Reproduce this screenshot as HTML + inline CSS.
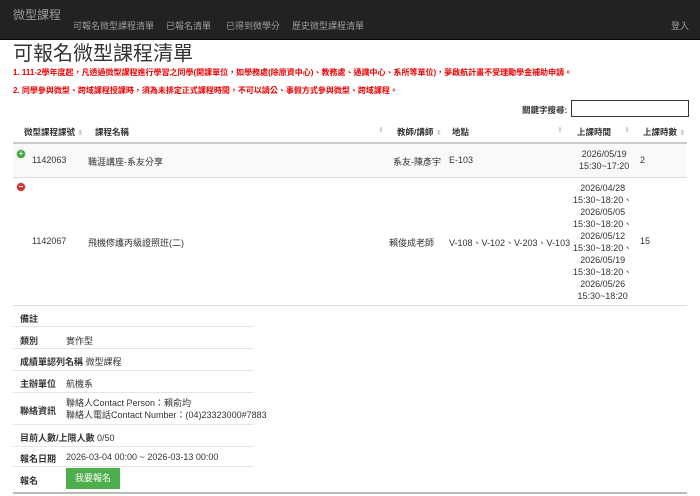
<!DOCTYPE html>
<html><head><meta charset="utf-8"><style>
*{margin:0;padding:0;box-sizing:border-box}
body{width:700px;height:496px;overflow:hidden;background:#fff;font-family:"Liberation Sans","Noto Sans CJK TC",sans-serif;color:#333;font-size:9px;position:relative}
.a{position:absolute;white-space:nowrap}
.nav{position:absolute;left:0;top:0;width:700px;height:40px;background:#222;border-bottom:1px solid #080808}
.nav .a{color:#9d9d9d;font-size:9px}
.red{color:#e00;font-weight:bold;font-size:8px}
.hd{font-weight:bold;font-size:8.5px}
.arr{color:#ccc;font-size:7px}
.line{position:absolute;left:13px;height:1px;background:#ddd}
.dl{position:absolute;left:13px;width:240px;height:1px;background:#e5e5e5}
.b{font-weight:bold}
</style></head><body>
<div class="nav">
<div class="a" style="left:13px;top:6px;font-size:12px">微型課程</div>
<div class="a" style="left:73px;top:19px">可報名微型課程清單</div>
<div class="a" style="left:166px;top:19px">已報名清單</div>
<div class="a" style="left:226px;top:19px">已得到微學分</div>
<div class="a" style="left:292px;top:19px">歷史微型課程清單</div>
<div class="a" style="left:671px;top:19px">登入</div>
</div>
<div class="a" style="left:13px;top:37px;font-size:20px;color:#333">可報名微型課程清單</div>
<div class="a red" style="left:13px;top:67px">1. 111-2學年度起，凡透過微型課程進行學習之同學(開課單位，如學務處(除原資中心)、教務處、通識中心、系所等單位)，夢啟航計畫不受理勵學金補助申請。</div>
<div class="a red" style="left:13px;top:85px">2. 同學參與微型、跨域課程授課時，須為未排定正式課程時間，不可以請公、事假方式參與微型、跨域課程。</div>
<div class="a b" style="left:522px;top:104px;font-size:8.5px">關鍵字搜尋:</div>
<div class="a" style="left:571px;top:100px;width:118px;height:17px;border:1px solid #333"></div>
<div class="a hd" style="left:24px;top:126px">微型課程課號 <span class="arr">⬍</span></div>
<div class="a hd" style="left:95px;top:126px">課程名稱</div><div class="a arr" style="left:378px;top:126px">⬍</div>
<div class="a hd" style="left:397px;top:126px">教師/講師 <span class="arr">⬍</span></div>
<div class="a hd" style="left:452px;top:126px">地點</div><div class="a arr" style="left:557px;top:126px">⬍</div>
<div class="a hd" style="left:577px;top:126px">上課時間</div><div class="a arr" style="left:624px;top:126px">⬍</div>
<div class="a hd" style="left:643px;top:126px">上課時數 <span class="arr">⬍</span></div>
<div class="line" style="top:142px;width:674px;height:2px;background:#ccc"></div>
<div class="a" style="left:13px;top:144px;width:674px;height:33px;background:#f9f9f9"></div>
<div class="a" style="left:16px;top:149px;width:10px;height:10px;border-radius:50%;background:#3a3;border:1px solid #ddd;color:#fff;font-size:8px;line-height:8px;text-align:center;font-weight:bold">+</div>
<div class="a" style="left:32px;top:155px">1142063</div>
<div class="a" style="left:88px;top:155px">職涯講座-系友分享</div>
<div class="a" style="left:393px;top:155px">系友-陳彥宇</div>
<div class="a" style="left:449px;top:155px">E-103</div>
<div class="a" style="left:579px;top:148px;text-align:center;line-height:12px">2026/05/19<br>15:30~17:20</div>
<div class="a" style="left:640px;top:155px">2</div>
<div class="line" style="top:177px;width:674px"></div>
<div class="a" style="left:16px;top:182px;width:10px;height:10px;border-radius:50%;background:#c33;border:1px solid #ddd;color:#fff;font-size:8px;line-height:7px;text-align:center;font-weight:bold">−</div>
<div class="a" style="left:32px;top:236px">1142067</div>
<div class="a" style="left:88px;top:236px">飛機修護丙級證照班(二)</div>
<div class="a" style="left:389px;top:236px">賴俊成老師</div>
<div class="a" style="left:449px;top:236px">V-108、V-102、V-203、V-103</div>
<div class="a" style="left:573px;top:182px;text-align:center;line-height:12px">2026/04/28<br>15:30~18:20、<br>2026/05/05<br>15:30~18:20、<br>2026/05/12<br>15:30~18:20、<br>2026/05/19<br>15:30~18:20、<br>2026/05/26<br>15:30~18:20</div>
<div class="a" style="left:640px;top:236px">15</div>
<div class="line" style="top:305px;width:674px"></div>
<div class="a b" style="left:20px;top:312px">備註</div>
<div class="dl" style="top:326px"></div>
<div class="a b" style="left:20px;top:334px">類別</div><div class="a" style="left:66px;top:334px">實作型</div>
<div class="dl" style="top:348px"></div>
<div class="a" style="left:20px;top:355px"><b>成績單認列名稱</b> 微型課程</div>
<div class="dl" style="top:370px"></div>
<div class="a b" style="left:20px;top:377px">主辦單位</div><div class="a" style="left:66px;top:377px">航機系</div>
<div class="dl" style="top:392px"></div>
<div class="a b" style="left:20px;top:404px">聯絡資訊</div>
<div class="a" style="left:66px;top:397px;line-height:12px">聯絡人Contact Person：賴俞均<br>聯絡人電話Contact Number：(04)23323000#7883</div>
<div class="dl" style="top:424px"></div>
<div class="a" style="left:20px;top:431px"><b>目前人數/上限人數</b> 0/50</div>
<div class="dl" style="top:446px"></div>
<div class="a b" style="left:20px;top:452px">報名日期</div><div class="a" style="left:66px;top:452px">2026-03-04 00:00 ~ 2026-03-13 00:00</div>
<div class="dl" style="top:466px"></div>
<div class="a b" style="left:20px;top:474px">報名</div>
<div class="a" style="left:66px;top:468px;width:54px;height:21px;background:#4cae4c;color:#fff;font-size:9px;line-height:21px;text-align:center">我要報名</div>
<div class="a" style="left:13px;top:492px;width:674px;height:2px;background:#bbb"></div>
</body></html>
